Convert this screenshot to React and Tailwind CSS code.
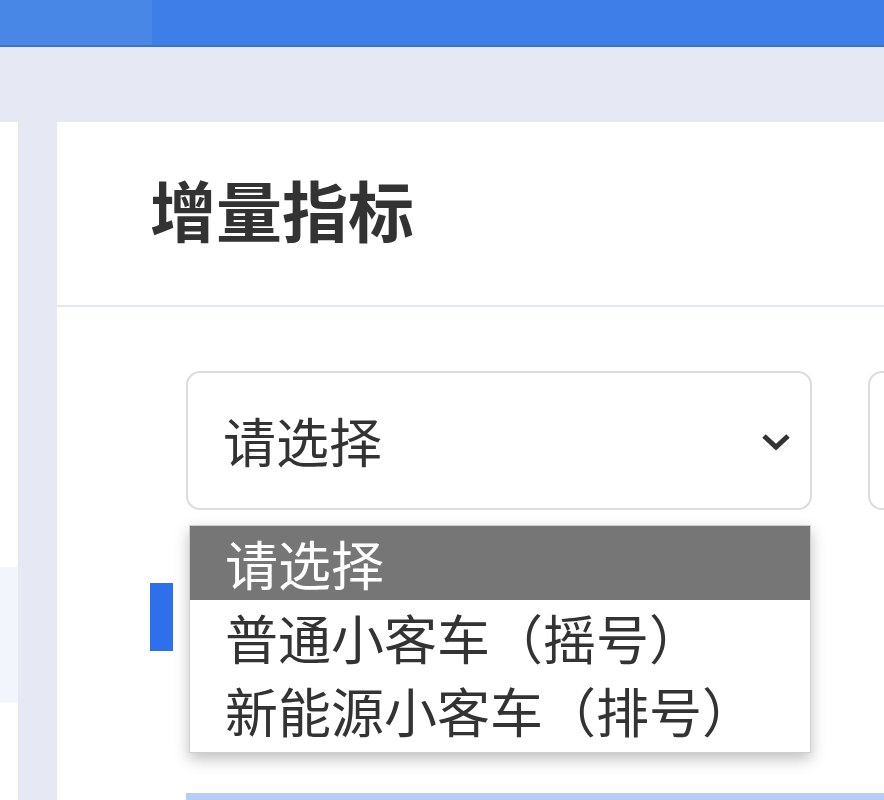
import React from "react";

const cjk = { fontFamily: '"Noto Sans CJK SC", "Noto Sans", sans-serif' };

export default function App() {
  return (
    <div className="w-[884px] h-[800px] overflow-hidden bg-[#e6e9f3] flex flex-col" style={cjk}>
      {/* Top bar */}
      <div className="h-[47px] shrink-0 flex border-b-[2px] border-[#3b72d4]">
        <div className="w-[152px] bg-[#4887e6]" />
        <div className="flex-1 bg-[#3e7ee8]" />
      </div>

      <div className="h-[75px] shrink-0" />

      <div className="flex-1 flex min-h-0">
        {/* Left menu edge */}
        <div className="w-[18px] shrink-0 bg-white flex flex-col">
          <div className="h-[445px]" />
          <div className="h-[136px] bg-[#f3f5fc]" />
        </div>
        <div className="w-[39px] shrink-0" />

        {/* Main card */}
        <div className="flex-1 min-w-0 overflow-hidden bg-white flex flex-col">
          <div className="h-[185px] shrink-0 border-b-[2px] border-[#e3e7ef] flex items-center pl-[93px] pb-[12px]">
            <h1 className="text-[66px] font-bold text-[#333] leading-none">增量指标</h1>
          </div>

          <div className="relative flex-1 pl-[129px] pt-[64px]">
            <div className="flex gap-[56px]">
              <div className="w-[626px] h-[139px] shrink-0 rounded-[14px] border-[2px] border-[#dcdcdc] flex items-center justify-between pl-[35px] pr-[18px]">
                <span className="text-[53px] text-[#333] leading-none">请选择</span>
                <svg width="32" height="22" viewBox="0 0 32 22" className="mt-[2px]">
                  <path d="M4 5 L16 16 L28 5" fill="none" stroke="#333" strokeWidth="5" />
                </svg>
              </div>
              <div className="w-[200px] h-[139px] shrink-0 rounded-[14px] border-[2px] border-[#dcdcdc]" />
            </div>

            {/* Blue accent */}
            <div className="mt-[73px] ml-[-36px] w-[23px] h-[68px] bg-[#2e6fec]" />

            {/* Bottom blue bar */}
            <div className="absolute left-[129px] right-0 bottom-0 h-[7px] bg-[#b7cdf5]" />

            {/* Dropdown list */}
            <div className="absolute left-[132px] top-[218px] w-[622px] bg-white border border-[#cfcfcf] shadow-[0_6px_14px_rgba(0,0,0,0.25)] flex flex-col pb-[6px]">
              <div className="h-[74px] bg-[#767676] text-white text-[53px] leading-none flex items-center pl-[35px]">请选择</div>
              <div className="h-[74px] text-[#333] text-[53px] leading-none flex items-center pl-[35px]">普通小客车（摇号）</div>
              <div className="h-[72px] text-[#333] text-[53px] leading-none flex items-center pl-[35px]">新能源小客车（排号）</div>
            </div>
          </div>
        </div>
      </div>
    </div>
  );
}
